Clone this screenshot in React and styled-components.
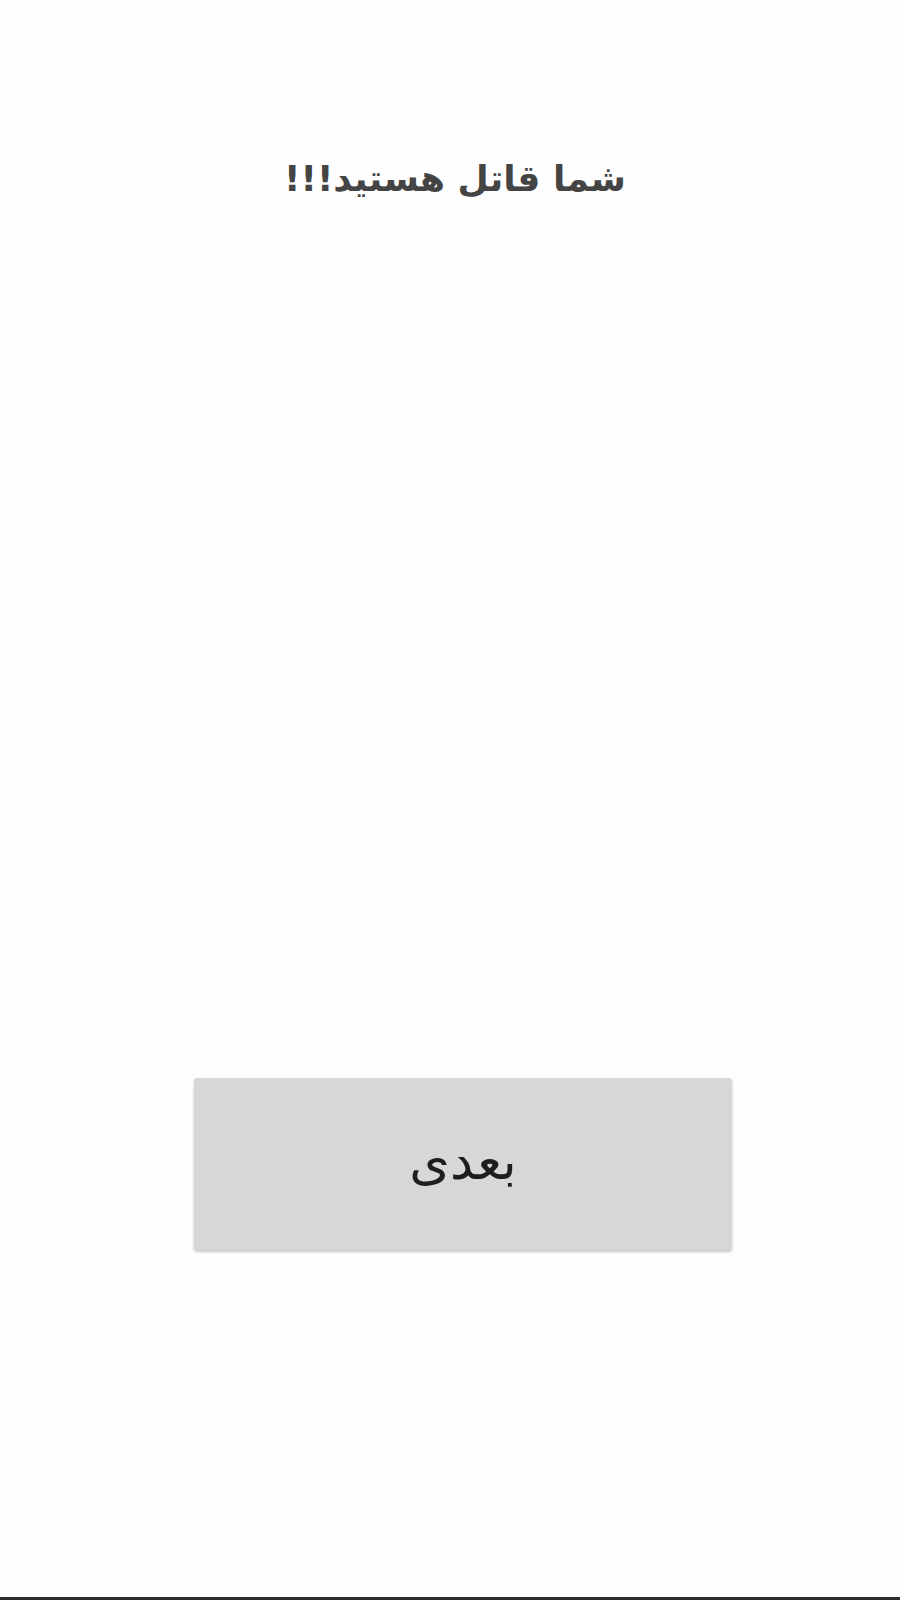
import React from "react";
import styled, { createGlobalStyle } from "styled-components";

const Global = createGlobalStyle`
  html, body { margin: 0; padding: 0; background: #fefefe; }
  * { box-sizing: border-box; }
`;

const Screen = styled.div`
  width: 900px;
  height: 1600px;
  display: flex;
  flex-direction: column;
  background: #fefefe;
  font-family: "DejaVu Sans", "Noto Sans", sans-serif;
  direction: rtl;
`;

const Header = styled.div`
  display: flex;
  justify-content: center;
  padding-top: 150px;
  padding-left: 10px;
`;

const Title = styled.h1`
  margin: 0;
  font-size: 36px;
  font-weight: bold;
  color: #444;
  line-height: 58px;
`;

const Spacer = styled.div`
  flex: 1;
`;

const Footer = styled.div`
  display: flex;
  justify-content: flex-start;
  padding-right: 168px;
  padding-bottom: 347px;
`;

const Button = styled.button`
  width: 538px;
  height: 172px;
  border: none;
  border-radius: 3px;
  background: #d6d7d7;
  box-shadow: 0 2px 3px rgba(0, 0, 0, 0.22);
  font-family: "DejaVu Sans", sans-serif;
  font-size: 52px;
  color: #1e1e1e;
  padding: 0 0 6px 0;
  cursor: pointer;
`;

const BottomBar = styled.div`
  height: 3px;
  background: #2c2c2c;
`;

export default function App() {
  return (
    <>
      <Global />
      <Screen>
        <Header>
          <Title>شما قاتل هستید!!!</Title>
        </Header>
        <Spacer />
        <Footer>
          <Button>بعدی</Button>
        </Footer>
        <BottomBar />
      </Screen>
    </>
  );
}
